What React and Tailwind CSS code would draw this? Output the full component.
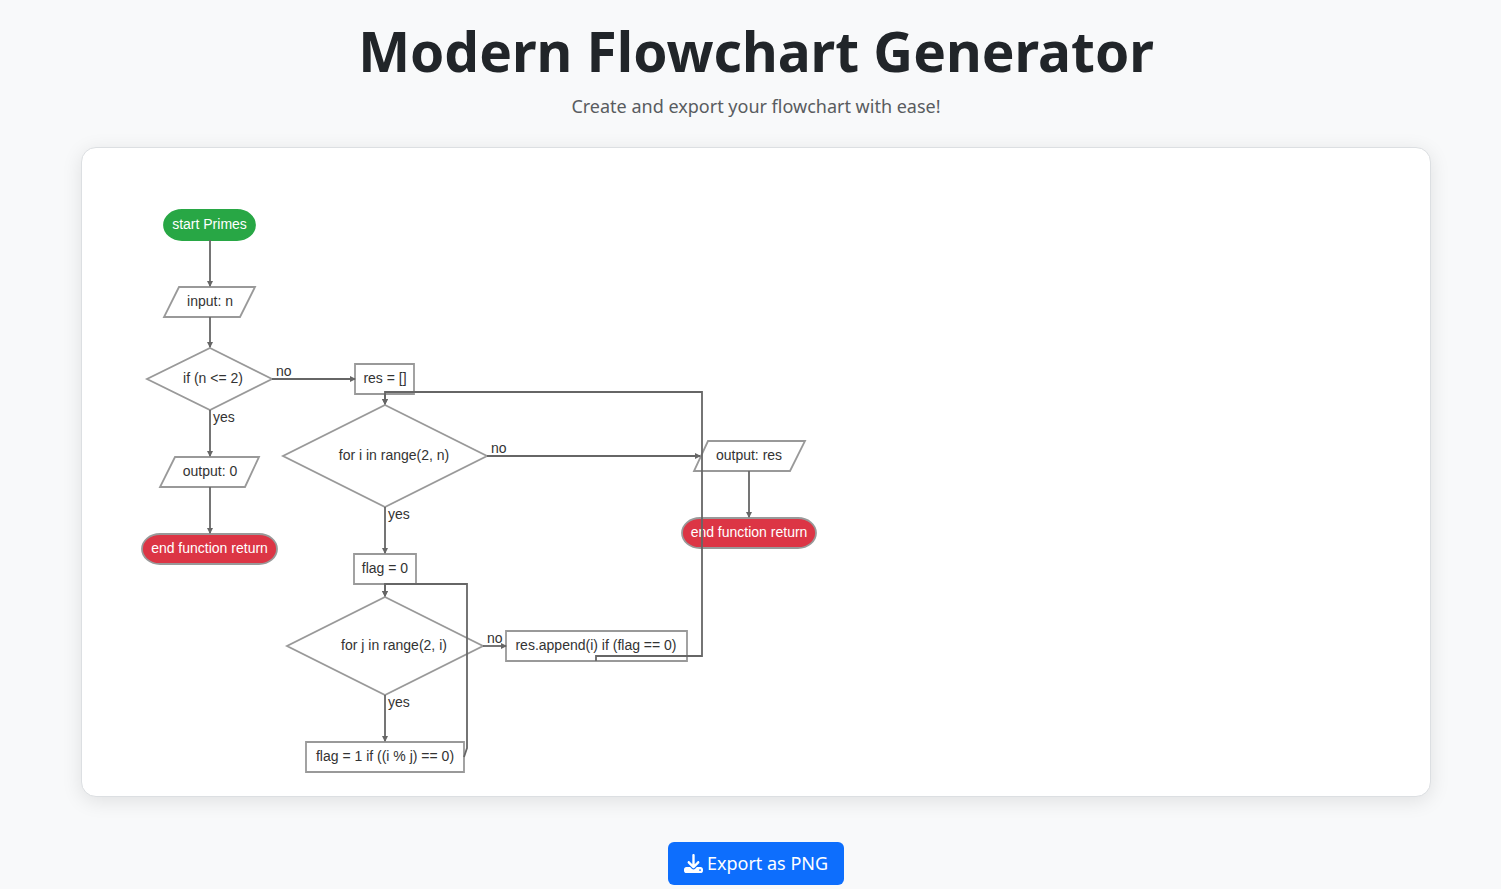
import { FaDownload } from "react-icons/fa6";

const boxes = [
  { points: "179,287 255,287 240,317 164,317" },
  { points: "210,348 272,379 210,410 147,379" },
  { points: "175,457 259,457 245,487 160,487" },
  { points: "355,364 414,364 414,394 355,394" },
  { points: "385,405 487,456 385,507 283,456" },
  { points: "708,441 805,441 790,471 694,471" },
  { points: "354,554 416,554 416,584 354,584" },
  { points: "385,597 483,646 385,695 287,646" },
  { points: "506,631 687,631 687,661 506,661" },
  { points: "306,742 464,742 464,772 306,772" },
];

const edges = [
  "M210 240V286",
  "M210 317V347",
  "M272 379H355",
  "M210 410V456",
  "M210 487V533",
  "M385 394V404",
  "M487 456H700",
  "M385 507V553",
  "M749 471V517",
  "M385 584V596",
  "M483 646H506",
  "M385 695V741",
  "M596 661V656H702V392H385V404",
  "M464 757L467 748V584H385V596",
];

const labels = [
  { x: 210, y: 306, text: "input: n" },
  { x: 213, y: 383, text: "if (n <= 2)" },
  { x: 210, y: 476, text: "output: 0" },
  { x: 385, y: 383, text: "res = []" },
  { x: 394, y: 460, text: "for i in range(2, n)" },
  { x: 749, y: 460, text: "output: res" },
  { x: 385, y: 573, text: "flag = 0" },
  { x: 394, y: 650, text: "for j in range(2, i)" },
  { x: 596, y: 650, text: "res.append(i) if (flag == 0)" },
  { x: 385, y: 761, text: "flag = 1 if ((i % j) == 0)" },
];

const answers = [
  { x: 276, y: 376, text: "no" },
  { x: 213, y: 422, text: "yes" },
  { x: 491, y: 453, text: "no" },
  { x: 388, y: 519, text: "yes" },
  { x: 487, y: 643, text: "no" },
  { x: 388, y: 707, text: "yes" },
];

const terminals = [
  { x: 164, y: 210, width: 91, text: "start Primes", box: "fill-[#28a745] stroke-[#28a745]" },
  { x: 142, y: 534, width: 135, text: "end function return", box: "fill-[#dc3545] stroke-[#999999]" },
  { x: 682, y: 518, width: 134, text: "end function return", box: "fill-[#dc3545] stroke-[#999999]" },
];

function Flowchart() {
  return (
    <svg
      viewBox="140 206 680 568"
      width="680"
      height="568"
      role="img"
      aria-label="Primes flowchart"
      className="block font-['Liberation_Sans',Arial,sans-serif] text-[14px]"
    >
      <defs>
        <marker id="arrow" viewBox="0 0 6 6" refX="5" refY="3" markerWidth="6" markerHeight="6" markerUnits="userSpaceOnUse" orient="auto">
          <path d="M0 0L6 3L0 6Z" fill="#666666" />
        </marker>
      </defs>
      {terminals.map((t) => (
        <g key={t.x}>
          <rect x={t.x} y={t.y} width={t.width} height="30" rx="18" strokeWidth="1.8" className={t.box} />
          <text x={t.x + t.width / 2} y={t.y + 19} textAnchor="middle" fill="#ffffff">
            {t.text}
          </text>
        </g>
      ))}
      <g fill="none" stroke="#999999" strokeWidth="1.8">
        {boxes.map((b) => (
          <polygon key={b.points} points={b.points} />
        ))}
      </g>
      <g fill="#333333">
        {labels.map((l) => (
          <text key={l.text} x={l.x} y={l.y} textAnchor="middle">
            {l.text}
          </text>
        ))}
        {answers.map((a) => (
          <text key={`${a.x}-${a.y}`} x={a.x} y={a.y}>
            {a.text}
          </text>
        ))}
      </g>
      <g fill="none" stroke="#666666" strokeWidth="1.8">
        {edges.map((d) => (
          <path key={d} d={d} markerEnd="url(#arrow)" />
        ))}
      </g>
    </svg>
  );
}

export default function App() {
  return (
    <div className="min-h-screen bg-[#f8f9fa] pt-4 pb-1 pl-[11px] font-['Noto_Sans','Open_Sans',sans-serif] text-[#212529]">
      <main className="mx-auto flex max-w-[1350px] flex-col items-center">
        <h1 className="text-center text-[55px] leading-[70px] font-bold">Modern Flowchart Generator</h1>
        <p className="mt-1 text-center text-lg leading-8 text-[#595c5f]">Create and export your flowchart with ease!</p>
        <section className="mt-[25px] w-full overflow-x-auto rounded-[15px] border border-[#dcdfe2] bg-white pt-[58px] pr-6 pb-[22px] pl-[58px] shadow-[0_4px_20px_rgba(0,0,0,0.1)]">
          <Flowchart />
        </section>
        <button
          type="button"
          className="mt-[45px] flex items-center gap-1 rounded-md bg-[#0d6efd] px-4 py-[7px] text-lg leading-[29px] text-white"
        >
          <FaDownload className="size-[19px]" aria-hidden="true" />
          Export as PNG
        </button>
      </main>
    </div>
  );
}
